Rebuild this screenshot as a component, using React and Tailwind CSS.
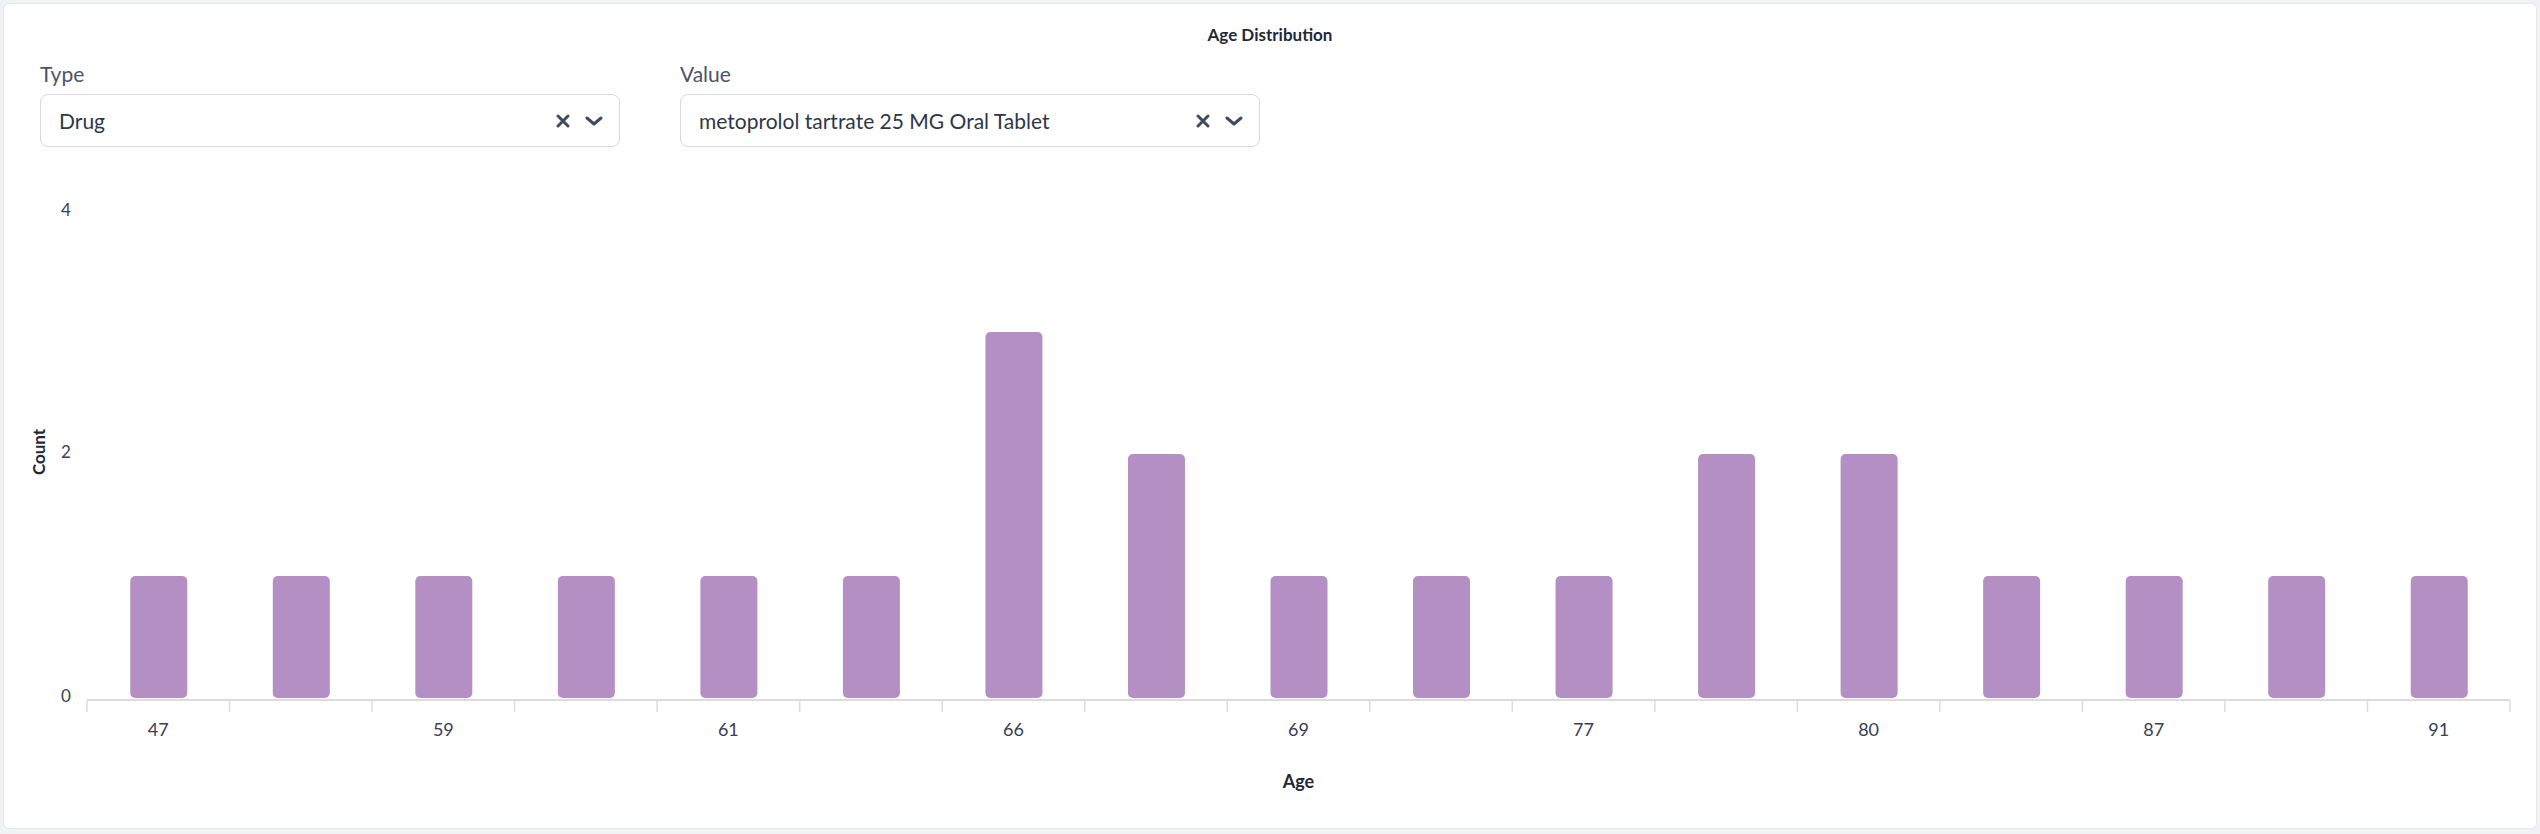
const AGES = [47, null, 59, null, 61, null, 66, null, 69, null, 77, null, 80, null, 87, null, 91]
const COUNTS = [1, 1, 1, 1, 1, 1, 3, 2, 1, 1, 1, 2, 2, 1, 1, 1, 1]

function Select({ label, value, width }) {
  return (
    <div className="flex flex-col" style={{ width }}>
      <div className="text-[21px] text-[#4a5568] leading-none mb-[10px]">{label}</div>
      <div className="h-[53px] rounded-[8px] border border-[#d6d9e0] bg-white flex items-center pl-[18px] pr-[16px]">
        <span className="flex-1 text-[21px] text-[#2d3748]">{value}</span>
        <svg width="16" height="16" viewBox="0 0 16 16" className="mr-[14px]">
          <path d="M3 3 L13 13 M13 3 L3 13" stroke="#3f4b5e" strokeWidth="3" strokeLinecap="round" />
        </svg>
        <svg width="18" height="12" viewBox="0 0 18 12">
          <path d="M2 3 L9 9 L16 3" stroke="#3f4b5e" strokeWidth="3" fill="none" strokeLinecap="round" strokeLinejoin="round" />
        </svg>
      </div>
    </div>
  )
}

export default function App() {
  const left = 83, right = 2506, base = 705, unit = 122
  const band = (right - left) / COUNTS.length
  return (
    <div className="w-[2540px] h-[834px] bg-[#f1f2f6] p-[3px]" style={{ fontFamily: 'Lato, "Open Sans", sans-serif' }}>
      <div className="h-[826px] bg-white rounded-[6px] border border-[#e4e6eb] flex flex-col">
        <div className="text-center text-[17px] font-bold text-[#1f2937] pt-[22px] leading-none">Age Distribution</div>
        <div className="flex gap-[60px] pl-[36px] pt-[20px]">
          <Select label="Type" value="Drug" width={580} />
          <Select label="Value" value="metoprolol tartrate 25 MG Oral Tablet" width={580} />
        </div>
        <svg width="2534" height="674" viewBox="0 152 2534 674">
          <g fontSize="17" fill="#374151">
            <text x="62" y="221" textAnchor="middle">4</text>
            <text x="62" y="463" textAnchor="middle">2</text>
            <text x="62" y="707" textAnchor="middle">0</text>
          </g>
          <text transform="translate(41 457) rotate(-90)" textAnchor="middle" fontSize="17" fontWeight="700" fill="#1f2937">Count</text>
          {COUNTS.map((c, i) => {
            const cx = left + band * i + band / 2
            const h = c * unit
            return <rect key={i} x={cx - 28} y={base - h - 2} width="57" height={h} rx="5" fill="#b48fc3" />
          })}
          <line x1={left} y1={base} x2={right} y2={base} stroke="#dcdcdc" strokeWidth="2" />
          {COUNTS.map((_, i) => (
            <line key={i} x1={left + band * i} y1={base} x2={left + band * i} y2={base + 12} stroke="#dcdcdc" strokeWidth="1.5" />
          ))}
          <line x1={right} y1={base} x2={right} y2={base + 12} stroke="#dcdcdc" strokeWidth="1.5" />
          {AGES.map((a, i) => a && (
            <text key={i} x={left + band * i + band / 2} y="741" textAnchor="middle" fontSize="18" fill="#374151">{a}</text>
          ))}
          <text x={(left + right) / 2} y="793" textAnchor="middle" fontSize="18" fontWeight="700" fill="#1f2937">Age</text>
        </svg>
      </div>
    </div>
  )
}
